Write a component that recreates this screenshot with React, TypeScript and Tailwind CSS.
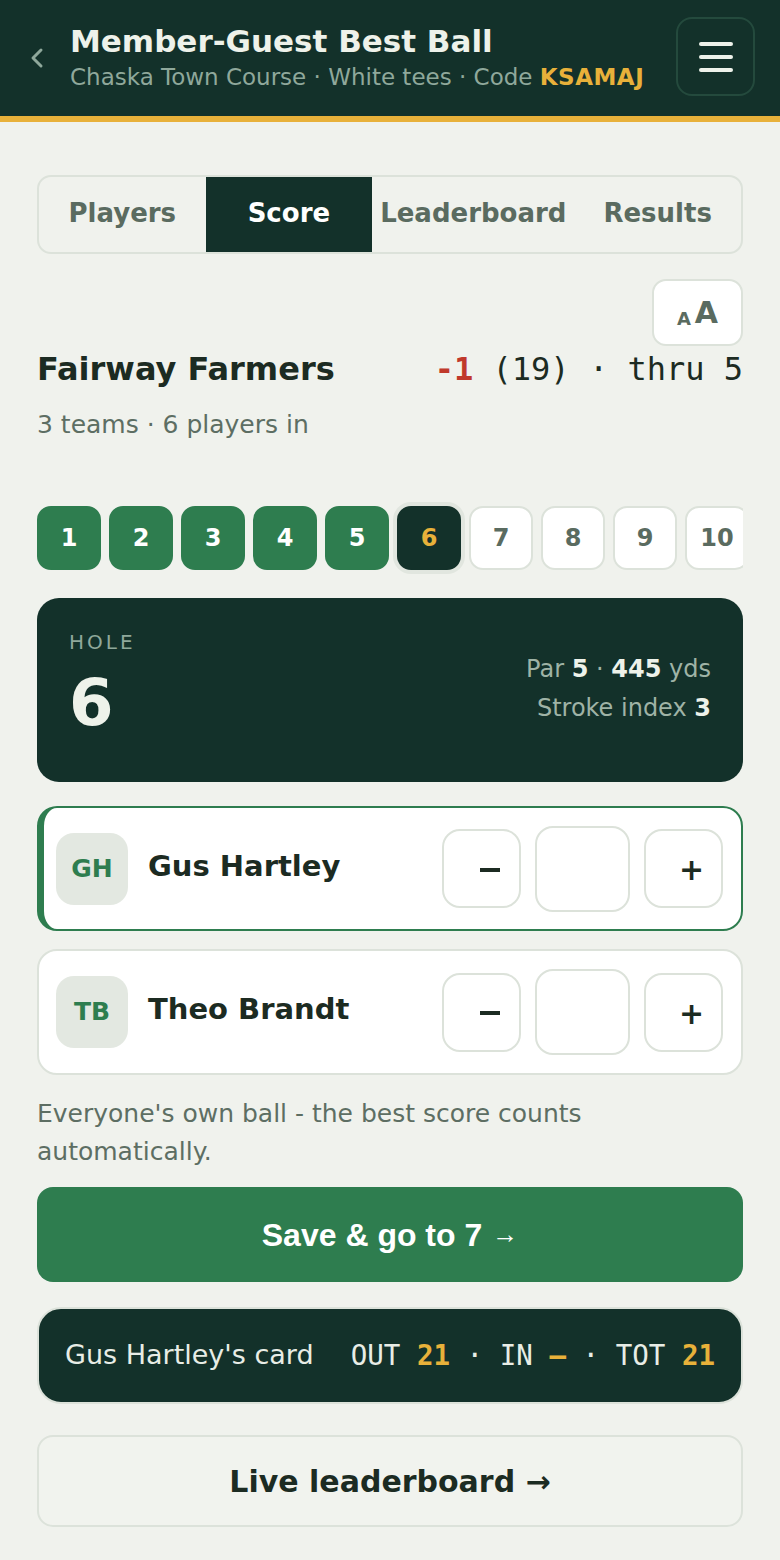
import React from 'react'

const holes = [1, 2, 3, 4, 5, 6, 7, 8, 9, 10]

const players = [
  { initials: 'GH', name: 'Gus Hartley', active: true },
  { initials: 'TB', name: 'Theo Brandt', active: false },
]

function HolePill({ n }: { n: number }) {
  if (n < 6) {
    return (
      <div className="w-[64px] h-[64px] shrink-0 rounded-[14px] bg-[#2e7d4f] text-white flex items-center justify-center text-[24px] font-bold">
        {n}
      </div>
    )
  }
  if (n === 6) {
    return (
      <div className="w-[64px] h-[64px] shrink-0 rounded-[14px] bg-[#13312a] text-[#e8b13a] flex items-center justify-center text-[24px] font-bold ring-4 ring-[#e1e6df]">
        {n}
      </div>
    )
  }
  return (
    <div className="w-[64px] h-[64px] shrink-0 rounded-[14px] bg-white border-2 border-[#dce2da] text-[#5a6b60] flex items-center justify-center text-[24px] font-bold">
      {n}
    </div>
  )
}

function PlayerRow({ initials, name, active }: { initials: string; name: string; active: boolean }) {
  return (
    <div
      className={
        active
          ? 'bg-white rounded-[20px] border-2 border-l-[7px] border-[#2e7d4f] h-[125px] flex items-center pl-[12px] pr-[18px]'
          : 'bg-white rounded-[20px] border-2 border-[#dce2da] h-[126px] flex items-center pl-[17px] pr-[18px]'
      }
    >
      <div className="w-[72px] h-[72px] rounded-[18px] bg-[#e3e8e1] text-[#2e7d4f] font-bold text-[25px] flex items-center justify-center">
        {initials}
      </div>
      <div className="ml-[20px] text-[29px] font-bold text-[#1c2b22] flex-1 -mt-[4px]">{name}</div>
      <div className="flex items-center gap-[14px]">
        <button className="w-[79px] h-[79px] rounded-[18px] border-2 border-[#dce2da] bg-white flex items-center justify-center pl-[16px] pt-[2px] text-[#1c2b22]">
          <span className="block w-[20px] h-[4px] bg-[#1c2b22]" />
        </button>
        <div className="w-[95px] h-[86px] rounded-[18px] border-2 border-[#dce2da] bg-white" />
        <button className="w-[79px] h-[79px] rounded-[18px] border-2 border-[#dce2da] bg-white flex items-center justify-center pl-[16px] pt-[2px] text-[#1c2b22] text-[30px] font-bold">
          +
        </button>
      </div>
    </div>
  )
}

export default function App() {
  return (
    <div className="min-h-screen bg-[#f0f2ed] font-['DejaVu_Sans',sans-serif] pb-[30px]">
      {/* header */}
      <header className="bg-[#13312a] h-[122px] border-b-[6px] border-[#e8b13a] flex items-center pl-[30px] pr-[25px]">
        <svg width="14" height="22" viewBox="0 0 14 22" className="shrink-0">
          <polyline points="11,3 3,11 11,19" fill="none" stroke="#8fa89b" strokeWidth="3" strokeLinecap="round" strokeLinejoin="round" />
        </svg>
        <div className="ml-[26px] flex-1 -mt-[2px]">
          <h1 className="text-[31px] font-bold text-[#eef2ea] leading-[36px]">Member-Guest Best Ball</h1>
          <p className="text-[23px] text-[#8fa89b] leading-[30px] mt-[3px]">
            Chaska Town Course · White tees · Code{' '}
            <span className="font-bold text-[#e8b13a] tracking-[0.5px]">KSAMAJ</span>
          </p>
        </div>
        <button className="w-[79px] h-[79px] rounded-[16px] border-2 border-[#244a3d] flex flex-col items-center justify-center gap-[9px] -mt-[3px]">
          <span className="block w-[34px] h-[4px] rounded-full bg-[#eef2ea]" />
          <span className="block w-[34px] h-[4px] rounded-full bg-[#eef2ea]" />
          <span className="block w-[34px] h-[4px] rounded-full bg-[#eef2ea]" />
        </button>
      </header>

      <main className="px-[37px] pt-[53px]">
        {/* tabs */}
        <div className="flex h-[79px] rounded-[14px] border-2 border-[#dce2da] overflow-hidden text-[26px] font-bold text-[#5a6b60]">
          <div className="flex-1 basis-0 px-[8px] flex items-center justify-center pb-[3px]">Players</div>
          <div className="flex-1 basis-0 px-[8px] flex items-center justify-center pb-[3px] bg-[#13312a] text-white">Score</div>
          <div className="flex-1 basis-0 px-[8px] flex items-center justify-center pb-[3px]">Leaderboard</div>
          <div className="flex-1 basis-0 px-[8px] flex items-center justify-center pb-[3px]">Results</div>
        </div>

        {/* team summary */}
        <div className="flex justify-end mt-[25px]">
          <button className="w-[91px] h-[67px] rounded-[14px] border-2 border-[#dce2da] bg-white flex items-end justify-center pb-[16px] text-[#5a6b60] font-bold">
            <span className="text-[18px] leading-none mr-[4px]">A</span>
            <span className="text-[30px] leading-none">A</span>
          </button>
        </div>
        <div className="flex items-center justify-between mt-[3px] h-[40px]">
          <h2 className="text-[32px] leading-[40px] font-bold text-[#1c2b22]">Fairway Farmers</h2>
          <div className="font-['DejaVu_Sans_Mono',monospace] text-[32px] leading-[40px] text-[#1c2b22] whitespace-pre">
            <span className="font-bold text-[#c0392b]">-1</span> (19) · thru 5
          </div>
        </div>
        <p className="text-[25px] leading-[36px] text-[#5d6e63] mt-[18px]">3 teams · 6 players in</p>

        {/* holes */}
        <div className="mt-[57px] py-[6px] flex gap-[8px] overflow-hidden">
          {holes.map((n) => (
            <HolePill key={n} n={n} />
          ))}
        </div>

        {/* hole card */}
        <div className="mt-[22px] bg-[#13312a] rounded-[22px] h-[184px] px-[32px] pt-[32px] flex justify-between">
          <div>
            <div className="text-[20px] tracking-[3px] text-[#8fa89b] leading-[24px]">HOLE</div>
            <div className="text-[64px] font-bold text-[#eef2ea] leading-[72px] mt-[13px]">6</div>
          </div>
          <div className="text-right text-[24px] text-[#9fb3a6] pt-[20px] leading-[39px]">
            <div>
              Par <b className="text-[#eef2ea]">5</b> · <b className="text-[#eef2ea]">445</b> yds
            </div>
            <div>
              Stroke index <b className="text-[#eef2ea]">3</b>
            </div>
          </div>
        </div>

        {/* players */}
        <div className="mt-[24px] flex flex-col gap-[18px]">
          {players.map((p) => (
            <PlayerRow key={p.initials} {...p} />
          ))}
        </div>

        <p className="mt-[20px] text-[25px] leading-[38px] text-[#5d6e63]">
          Everyone's own ball - the best score counts automatically.
        </p>

        <button className="mt-[16px] w-full h-[95px] rounded-[16px] bg-[#2e7d4f] text-white font-['Liberation_Sans',sans-serif] font-bold text-[32px] flex items-center justify-center">
          Save &amp; go to 7 <span className="font-normal text-[26px] ml-[10px]">→</span>
        </button>

        <div className="mt-[25px] h-[97px] rounded-[24px] bg-[#13312a] border-2 border-[#dce2da] flex items-center justify-between px-[26px]">
          <span className="text-[27px] text-[#e8ede6]">Gus Hartley's card</span>
          <span className="font-['DejaVu_Sans_Mono',monospace] text-[27.5px] text-[#e8ede6] whitespace-pre">
            OUT <b className="text-[#e8b13a]">21</b> · IN <b className="text-[#e8b13a]">–</b> · TOT <b className="text-[#e8b13a]">21</b>
          </span>
        </div>

        <button className="mt-[31px] w-full h-[92px] rounded-[16px] border-2 border-[#dce2da] bg-[#f1f3ee] text-[30px] font-bold text-[#1c2b22] flex items-center justify-center">
          Live leaderboard →
        </button>
      </main>
    </div>
  )
}
